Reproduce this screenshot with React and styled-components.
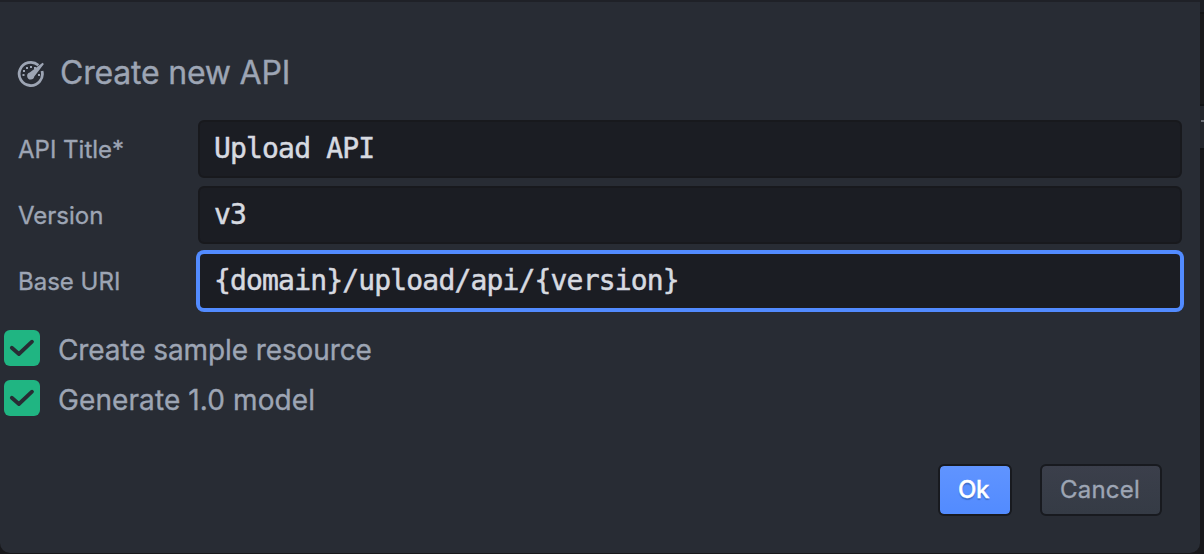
import React from 'react';
import styled, { createGlobalStyle, css } from 'styled-components';

const GlobalStyle = createGlobalStyle`
  * { box-sizing: border-box; }
  html, body { margin: 0; background: #18181b; }
  body {
    overflow: hidden;
    font-family: Inter, "Liberation Sans", sans-serif;
    color: #9da5b4;
    -webkit-text-stroke: 0.35px currentColor;
  }
`;

const Screen = styled.div`
  display: flex;
  width: 1204px;
  height: 554px;
`;

const Dialog = styled.form`
  display: flex;
  flex-direction: column;
  width: 1200px;
  height: 553px;
  padding-top: 49px;
  border-top: 2px solid #1f2127;
  border-radius: 0 0 10px 10px;
  background: #282c34;
`;

const Backdrop = styled.div`
  width: 4px;
  display: flex;
  flex-direction: column;
`;

const Strip = styled.div`
  height: ${(p) => p.$h}px;
  background: ${(p) => p.$c};
  margin-left: ${(p) => p.$indent || 0}px;
`;

const Tab = styled.div`
  height: 42px;
  padding-top: 14px;
  background: #23262c;
`;

const Header = styled.header`
  display: flex;
  align-items: center;
  height: 44px;
  padding-left: 17px;
  gap: 15px;
`;

const GaugeIcon = styled.svg`
  width: 28px;
  height: 28px;
  margin-top: 2px;
`;

const Title = styled.h1`
  margin: 0;
  font-size: 32px;
  font-weight: 400;
  line-height: 44px;
  letter-spacing: -0.2px;
  white-space: nowrap;
`;

const Fields = styled.div`
  display: flex;
  flex-direction: column;
  gap: 8px;
  margin-top: 25px;
  padding: 0 18px;
`;

const Field = styled.label`
  display: flex;
  align-items: center;
  height: 58px;
`;

const Label = styled.span`
  width: 180px;
  padding-top: 2px;
  font-size: 24px;
  line-height: 32px;
`;

const Input = styled.input`
  flex: 1;
  min-width: 0;
  height: 58px;
  padding: 0 14px 2px;
  border: 2px solid #18191d;
  border-radius: 6px;
  outline: none;
  background: #1b1d23;
  color: #d7dae0;
  font: 28px "DejaVu Sans Mono", monospace;
  letter-spacing: -0.83px;
  -webkit-text-stroke: 0.5px currentColor;
  ${(p) => p.$focused && css`
    border-color: #528bff;
    box-shadow: 0 0 0 2px #528bff;
  `}
`;

const Options = styled.div`
  display: flex;
  flex-direction: column;
  gap: 14px;
  margin-top: 20px;
  padding-left: 4px;
`;

const Option = styled.label`
  display: flex;
  align-items: center;
  gap: 18px;
  height: 36px;
  font-size: 28px;
`;

const Box = styled.span`
  display: flex;
  width: 36px;
  height: 36px;
  border-radius: 6px;
  background: #20b582;
`;

const OptionText = styled.span`
  padding-top: 4px;
  line-height: 36px;
  letter-spacing: ${(p) => p.$track}px;
`;

const Actions = styled.footer`
  display: flex;
  justify-content: flex-end;
  gap: 28px;
  margin-top: 48px;
  padding-right: 38px;
`;

const Button = styled.button`
  width: ${(p) => (p.$primary ? 74 : 122)}px;
  height: 52px;
  padding: 0 ${(p) => (p.$primary ? 3 : 2)}px 2px 0;
  border: 2px solid #181a1f;
  border-radius: 6px;
  background: ${(p) => (p.$primary
    ? 'linear-gradient(#6094ff, #528bff)'
    : 'linear-gradient(#3b3f4b, #353b45)')};
  background-clip: padding-box;
  color: ${(p) => (p.$primary ? '#fff' : '#9da5b4')};
  font: ${(p) => (p.$primary ? 500 : 400)} 24px Inter, sans-serif;
  letter-spacing: ${(p) => (p.$primary ? -0.4 : 0.2)}px;
  text-shadow: ${(p) => (p.$primary ? '0 2px 1px rgba(20, 50, 110, 0.35)' : 'none')};
`;

const Gauge = () => (
  <GaugeIcon viewBox="0 0 28 28" fill="none" stroke="#9da5b4">
    <path d="M21.4 5.2A11.6 11.6 0 1 0 25 11" strokeWidth="2.8" />
    <path d="M25.6 2.8 26.9 4 17.3 16.5A3.6 3.6 0 1 1 12.7 12.5Z" fill="#9da5b4" stroke="none" />
    <g fill="#9da5b4" stroke="none">
      <rect x="5.5" y="14" width="2" height="2" />
      <rect x="6" y="10" width="2" height="2" />
      <rect x="9" y="7" width="2" height="2" />
      <rect x="13" y="6" width="2" height="2" />
      <rect x="17" y="7" width="2" height="2" />
      <rect x="21" y="14" width="2" height="2" />
    </g>
  </GaugeIcon>
);

const Check = () => (
  <svg width="36" height="36" viewBox="0 0 36 36" fill="none" stroke="#282c34" strokeWidth="3.8" strokeLinecap="round" strokeLinejoin="round">
    <path d="M7.8 17.8 14.9 24 28 11.7" />
  </svg>
);

export default function App() {
  return (
    <Screen>
      <GlobalStyle />
      <Dialog>
        <Header>
          <Gauge />
          <Title>Create new API</Title>
        </Header>
        <Fields>
          <Field><Label>API Title*</Label><Input defaultValue="Upload API" /></Field>
          <Field><Label>Version</Label><Input defaultValue="v3" /></Field>
          <Field><Label>Base URI</Label><Input $focused defaultValue="{domain}/upload/api/{version}" /></Field>
        </Fields>
        <Options>
          <Option><Box><Check /></Box><OptionText $track={-0.1}>Create sample resource</OptionText></Option>
          <Option><Box><Check /></Box><OptionText $track={0.1}>Generate 1.0 model</OptionText></Option>
        </Options>
        <Actions>
          <Button type="button" $primary>Ok</Button>
          <Button type="button">Cancel</Button>
        </Actions>
      </Dialog>
      <Backdrop>
        <Strip $h={12} $c="#1c1e23" />
        <Strip $h={2} $c="#131416" />
        <Strip $h={90} $c="#19191b" />
        <Strip $h={2} $c="#111214" />
        <Tab><Strip $h={2} $c="#6a6e76" $indent={1} /></Tab>
        <Strip $h={2} $c="#111214" />
      </Backdrop>
    </Screen>
  );
}
